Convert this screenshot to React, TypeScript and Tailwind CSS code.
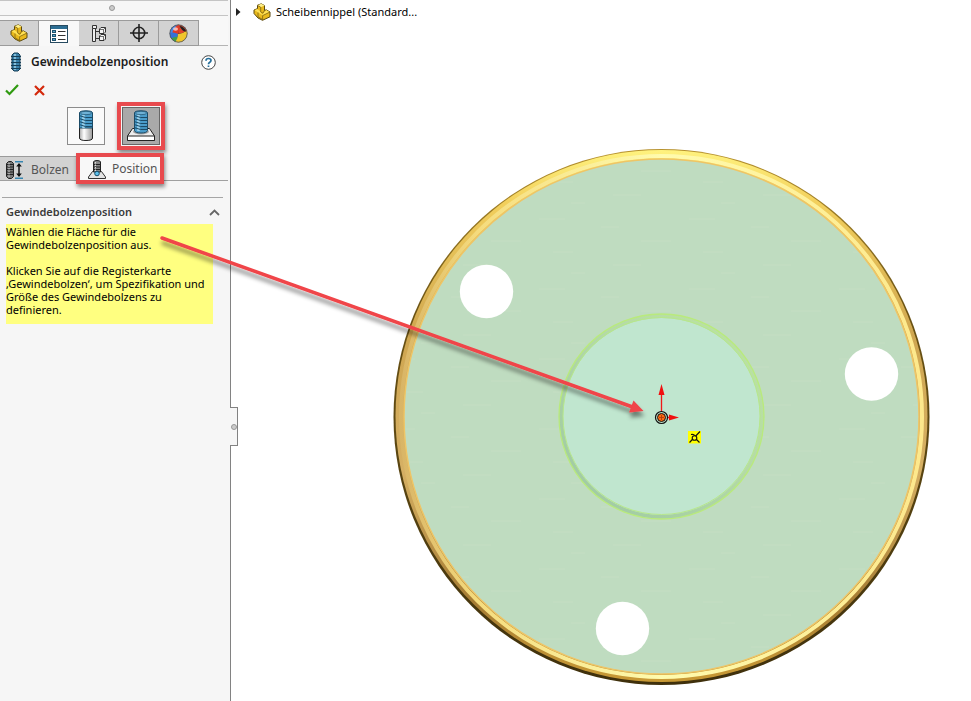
import type { ReactNode } from 'react';

const holes = [
  { x: 255.5, y: 291.5 },
  { x: 640.5, y: 374 },
  { x: 391.5, y: 628.5 },
];

function PartIcon() {
  return (
    <svg width="18" height="18" viewBox="0 0 18 18" strokeLinejoin="round" aria-hidden="true">
      <path d="M1 7 L4.500 5.600 V2.200 L8.300 .8 L11.500 2.600 V7.500 L13.200 6.800 L17 9 V13.800 L9.500 17.300 L5 15 L1 10.500 Z" fill="#e9b91c" stroke="#5c4a10" />
      <path d="M4.500 2.200 L8.300 .8 L11.500 2.600 L7.700 4.200 Z" fill="#fff08a" />
      <path d="M1.400 7 L4.500 6 L8 9 L9 11.800 L13.200 7 L16.600 9 L9.700 12.600 Z" fill="#ffe155" />
      <path d="M4.500 2.400 L7.700 4.200 V9 L10 10.200 L11.500 7.200 M9.600 12.600 V17 M9.600 12.600 L17 9 M5 9.500 V13.800 L9.600 16.500" fill="none" stroke="#7d6414" strokeWidth=".8" />
    </svg>
  );
}

function ListIcon() {
  return (
    <svg width="18" height="18" viewBox="0 0 18 18" aria-hidden="true">
      <rect x=".5" y=".5" width="17" height="17" fill="#fff" stroke="#274a60" />
      <rect x="1" y="1" width="16" height="3" fill="#2b6d93" />
      {[6, 10, 14].map((y) => (
        <g key={y}>
          <rect x="2.500" y={y - 0.5} width="3" height="2" fill="#58a9cf" stroke="#1f526e" />
          <path d={`M8 ${y + 0.5} H15.500`} stroke="#333" />
        </g>
      ))}
    </svg>
  );
}

function ConfigIcon() {
  return (
    <svg width="16" height="19" viewBox="0 0 16 19" fill="none" stroke="#333" aria-hidden="true">
      <path d="M1.500 1.500 H5.500 V4.500 H1.500 Z M1.500 4.500 V17.500 H4.500 V4.500 M4.500 7.500 H8 M4.500 14.500 H8" fill="#eee" />
      <path d="M8.500 5 L10 3.500 H14.500 V8 L13 9.500 H8.500 Z M8.500 12 L10 10.500 H14.500 V15 L13 16.500 H8.500 Z" fill="#f4f4f4" />
      <path d="M8.500 5.500 H12.500 V9.500 M12.500 5.500 L14.500 3.500 M8.500 12.500 H12.500 V16.500 M12.500 12.500 L14.500 10.500" strokeWidth=".7" />
    </svg>
  );
}

function TargetIcon() {
  return (
    <svg width="18" height="18" viewBox="0 0 18 18" fill="none" stroke="#222" strokeWidth="1.600" aria-hidden="true">
      <circle cx="9" cy="9" r="5.700" />
      <path d="M9 0 V18 M0 9 H18" />
    </svg>
  );
}

function AppearanceIcon() {
  return (
    <svg width="19" height="19" viewBox="0 0 19 19" aria-hidden="true">
      <circle cx="9.500" cy="9.500" r="8.700" fill="#333" />
      <path d="M9 .8 A8.700 8.700 0 0 0 .8 9 Q4 11.500 8.500 10 Z" fill="#4b86e4" />
      <path d="M9 .8 Q4 4 3.500 9 Q6 11 9.500 9.500 Q10 4 12 1.200 Z" fill="#e33a26" />
      <path d="M.8 9 Q5 7.500 9 10 Q9 15 6.500 17.700 A8.700 8.700 0 0 1 .8 9 Z" fill="#3572d8" />
      <path d="M2.500 14.500 Q6 12 9 13 Q8.500 16 6.500 17.700 Q4 16.800 2.500 14.500 Z" fill="#3fa04a" />
      <path d="M9 10 Q14 9.500 17.700 6.500 A8.700 8.700 0 0 1 6.500 17.700 Q9 15 9 10 Z" fill="#f0c62c" />
      <path d="M9.500 9.500 Q9.500 4 12 1.200 Q15.500 2.500 17.700 6.500 Q14 9.500 9.500 9.500 Z" fill="#e0452c" />
      <path d="M10.500 2 Q15.500 2.500 17.200 7.500 Q13.500 8 10.500 2 Z" fill="#222" />
      <ellipse cx="6.500" cy="5" rx="2.500" ry="1.800" fill="#fff" opacity=".65" />
      <circle cx="9.500" cy="9.500" r="8.700" fill="none" stroke="#555" strokeWidth=".8" />
    </svg>
  );
}

function StudIcon() {
  return (
    <svg width="12" height="20" viewBox="0 0 12 20" aria-hidden="true">
      <path d="M4 1 H8 L10 3 V17 L8 19 H4 L2 17 V3 Z" fill="#3a82ab" stroke="#173f57" />
      <path d="M1 4.500 H11 M1 7.500 H11 M1 10.500 H11 M1 13.500 H11 M1 16.500 H11" stroke="#173f57" />
      <path d="M5 2 V18" stroke="#9ccfe8" strokeWidth="1.500" strokeDasharray="2 1" />
    </svg>
  );
}

function Thread() {
  return (
    <g>
      <path d="M3.500 3 Q3.500 .8 10 .8 Q16.500 .8 16.500 3 V18 H3.500 Z" fill="#4a9cca" stroke="#1b4b67" />
      <path d="M7.500 3 V18" stroke="#a2d6ee" strokeWidth="2.500" />
      <ellipse cx="10" cy="3" rx="5.500" ry="1.700" fill="#6fb2d6" stroke="#1d4f6c" strokeWidth=".7" />
      <path d="M3 5.500 Q9 8.500 17 7.500 M3 8.500 Q9 11.500 17 10.500 M3 11.500 Q9 14.500 17 13.500 M3 14.500 Q9 17.500 17 16.500" fill="none" stroke="#1b4b67" />
    </g>
  );
}

function ShaftStudIcon() {
  return (
    <svg width="20" height="32" viewBox="0 0 20 32" aria-hidden="true">
      <defs>
        <linearGradient id="shaft">
          <stop offset="0" stopColor="#aaa" />
          <stop offset=".35" stopColor="#fff" />
          <stop offset="1" stopColor="#9a9a9a" />
        </linearGradient>
      </defs>
      <path d="M3.500 16 V28 Q3.500 30.500 10 30.500 Q16.500 30.500 16.500 28 V16 Z" fill="url(#shaft)" stroke="#222" />
      <Thread />
    </svg>
  );
}

function PlateStudIcon() {
  return (
    <svg width="30" height="32" viewBox="0 0 30 32" aria-hidden="true">
      <path d="M6.500 18.500 H23.500 L28.500 26 V30.500 H1.500 V26 Z" fill="#eee" stroke="#222" />
      <path d="M1.500 26 H28.500 V30.500 H1.500 Z" fill="#fff" stroke="#222" />
      <ellipse cx="15" cy="21.500" rx="8" ry="3" fill="#a4a4a4" />
      <g transform="translate(5 0)">
        <path d="M3.500 17 V20.500 Q4 23 10 23 Q16 23 16.500 20.500 V17 Z" fill="#4a9cca" stroke="#1b4b67" />
        <Thread />
        <path d="M4 18 H16" stroke="#4a9cca" strokeWidth="1.500" />
        <path d="M7.500 17 V21" stroke="#a2d6ee" strokeWidth="2.500" />
        <path d="M3 17.500 Q9 20.500 17 19.500" fill="none" stroke="#1b4b67" />
      </g>
    </svg>
  );
}

function BoltSizeIcon() {
  return (
    <svg width="17" height="18" viewBox="0 0 17 18" aria-hidden="true">
      <path d="M2.500 .5 H5.500 L7.500 2.500 V15.500 L5.500 17.500 H2.500 L.5 15.500 V2.500 Z" fill="#777" stroke="#222" />
      <path d="M0 3.500 H8 M0 6 H8 M0 8.500 H8 M0 11 H8 M0 13.500 H8" stroke="#222" />
      <path d="M3 2 V16" stroke="#ddd" strokeDasharray="1.500 1" />
      <path d="M9 .8 H17 M9 17.200 H17" stroke="#3886b0" strokeWidth="1.500" />
      <path d="M13 3 V15" stroke="#111" strokeWidth="1.500" />
      <path d="M10.200 5.500 L13 2 L15.800 5.500 Z M10.200 12.500 L13 16 L15.800 12.500 Z" fill="#111" />
    </svg>
  );
}

function BoltPositionIcon() {
  return (
    <svg width="18" height="19" viewBox="0 0 18 19" aria-hidden="true">
      <path d="M4.500 11.500 H13.500 L17.500 17 V18.500 H.5 V17 Z" fill="#e4e4e4" stroke="#333" />
      <path d="M5.500 2 Q5.500 .5 9 .5 Q12.500 .5 12.500 2 V12 H5.500 Z" fill="#888" stroke="#222" />
      <path d="M5 4.500 H13 M5 7 H13 M5 9.500 H13" stroke="#222" />
      <path d="M7.500 2 V11" stroke="#ddd" strokeDasharray="1.500 1" />
      <circle cx="9" cy="13.500" r="2.300" fill="#5fc0ea" stroke="#124a68" />
    </svg>
  );
}

function ManagerTab({ label, active, children }: { label: string; active?: boolean; children: ReactNode }) {
  return (
    <button
      type="button"
      aria-label={label}
      className={
        active
          ? 'flex h-[26px] w-10 items-center justify-center border-t border-[#a0a0a0] bg-[#f8f8f8]'
          : 'flex h-[26px] w-10 items-center justify-center border border-l-0 border-[#9b9b9b] bg-[#d2d2d2]'
      }
    >
      {children}
    </button>
  );
}

function PropertyPanel() {
  return (
    <aside className="relative w-[231px] shrink-0 border-r border-[#828282] bg-[#f6f6f6]">
      <div className="mr-0.5 flex h-4 items-center justify-center border-t border-b border-[#c4c4c4] pr-1">
        <span className="size-1.5 rounded-full border border-[#999] bg-[#ccc]" />
      </div>

      <div className="mr-0.5 flex border-b border-[#b4b4b4] bg-[#f8f8f8] pt-1">
        <div className="-mb-px -ml-px flex">
          <ManagerTab label="FeatureManager"><PartIcon /></ManagerTab>
          <ManagerTab label="PropertyManager" active><ListIcon /></ManagerTab>
          <ManagerTab label="ConfigurationManager"><ConfigIcon /></ManagerTab>
          <ManagerTab label="DimXpertManager"><TargetIcon /></ManagerTab>
          <ManagerTab label="DisplayManager"><AppearanceIcon /></ManagerTab>
        </div>
      </div>

      <div className="flex h-8 items-center pr-[14px] pl-[10px]">
        <StudIcon />
        <h1 className="ml-[9px] flex-1 text-[12px] font-semibold text-[#1c1c1c]">Gewindebolzenposition</h1>
        <button type="button" aria-label="Hilfe">
          <svg width="15" height="15" viewBox="0 0 15 15" fill="none">
            <circle cx="7.500" cy="7.500" r="6.800" fill="#fff" stroke="#444" />
            <path d="M5 5.700 Q5 3.500 7.500 3.500 Q10 3.500 10 5.500 Q10 6.700 8.500 7.400 Q7.500 8 7.500 9.300 M7.500 10.400 V12" stroke="#256f9b" strokeWidth="1.700" />
          </svg>
        </button>
      </div>

      <div className="flex h-6 items-center gap-[15px] pl-[5px]">
        <button type="button" aria-label="OK">
          <svg width="14" height="12" viewBox="0 0 14 12" fill="none">
            <path d="M1 6.500 L4.500 10 L13 1" stroke="#2f9a10" strokeWidth="2.200" />
          </svg>
        </button>
        <button type="button" aria-label="Abbrechen">
          <svg width="11" height="11" viewBox="0 0 11 11" fill="none">
            <path d="M1 1 L10 10 M10 1 L1 10" stroke="#d4290c" strokeWidth="2.200" />
          </svg>
        </button>
      </div>

      <div className="flex gap-[17px] pt-[5px] pl-[67px]">
        <button type="button" aria-label="Gewindebolzen mit Schaft" className="flex size-[38px] items-center justify-center border border-[#8c8c8c] bg-[#fafafa]">
          <ShaftStudIcon />
        </button>
        <button type="button" aria-label="Gewindebolzen auf Fläche" className="relative flex size-[38px] items-center justify-center border border-[#666] bg-[#a9a9a9]">
          <PlateStudIcon />
          <span className="pointer-events-none absolute -inset-1.5 border-4 border-[#e84a4e] shadow-[1px_3px_4px_rgba(0,0,0,0.45)]" />
        </button>
      </div>

      <div className="mt-[11px] mr-0.5 flex h-[25px] border-b border-[#a0a0a0] text-[12px] text-[#555]">
        <button type="button" className="flex w-20 items-center gap-2 border-t border-[#9b9b9b] bg-[#d2d2d2] pt-0.5 pl-1.5">
          <BoltSizeIcon />
          Bolzen
        </button>
        <button type="button" className="relative flex w-20 items-center gap-1.5 bg-[#f8f8f8] pt-0.5 pl-2">
          <BoltPositionIcon />
          Position
          <span className="pointer-events-none absolute -inset-x-1 -top-[3px] -bottom-1 border-4 border-[#e84a4e] shadow-[1px_3px_4px_rgba(0,0,0,0.45)]" />
        </button>
      </div>

      <section className="mt-4 mr-[7px] ml-0.5 border-t border-[#a6a6a6] pl-1">
        <button type="button" aria-expanded="true" className="flex h-[26px] w-full items-center justify-between pt-0.5 pr-[3px] text-[11px] font-semibold text-[#3a3a3a]">
          Gewindebolzenposition
          <svg width="11" height="7" viewBox="0 0 11 7" fill="none" aria-hidden="true">
            <path d="M1 6 L5.500 1.500 L10 6" stroke="#666" strokeWidth="1.800" />
          </svg>
        </button>
        <div className="mr-[10px] h-[100px] bg-[#ffff80] pt-px text-[11px] leading-[13px] text-black">
          <p>Wählen die Fläche für die<br />Gewindebolzenposition aus.</p>
          <p className="mt-[13px] whitespace-nowrap">
            Klicken Sie auf die Registerkarte<br />
            ‚Gewindebolzen‘, um Spezifikation und<br />
            Größe des Gewindebolzens zu<br />
            definieren.
          </p>
        </div>
      </section>

      <button
        type="button"
        aria-label="Bereich einklappen"
        className="absolute top-[407px] left-full flex h-[39px] w-2 items-center justify-center border border-l-0 border-[#828282] bg-[#f6f6f6]"
      >
        <span className="size-1.5 shrink-0 rounded-full border border-[#999] bg-[#ccc]" />
      </button>
    </aside>
  );
}

function DiscView() {
  return (
    <svg className="absolute inset-0 size-full" role="img" aria-label="Scheibennippel">
      <defs>
        <linearGradient id="edge" x1="0" y1="0" x2="0" y2="1">
          <stop offset="0" stopColor="#b8932f" />
          <stop offset=".3" stopColor="#6b5314" />
          <stop offset="1" stopColor="#3f300c" />
        </linearGradient>
        <linearGradient id="rim" x1="0" y1="0" x2="0" y2="1">
          <stop offset="0" stopColor="#fff27e" />
          <stop offset=".1" stopColor="#f2cf5c" />
          <stop offset=".35" stopColor="#cfa650" />
          <stop offset=".6" stopColor="#d6b064" />
          <stop offset=".85" stopColor="#a67c33" />
          <stop offset="1" stopColor="#c99a35" />
        </linearGradient>
        <linearGradient id="shine" x1="0" y1="0" x2="1" y2="0">
          <stop offset="0" stopColor="#d9b566" />
          <stop offset=".15" stopColor="#f5dc7e" />
          <stop offset=".5" stopColor="#fffbae" />
          <stop offset="1" stopColor="#fde88c" />
        </linearGradient>
        <linearGradient id="groove" x1="0" y1="1" x2="1" y2="0">
          <stop offset="0" stopColor="#9cc7a4" />
          <stop offset=".6" stopColor="#b5dba6" />
          <stop offset="1" stopColor="#bce4a0" />
        </linearGradient>
        <pattern id="brushed" width="150" height="70" patternUnits="userSpaceOnUse">
          <path d="M8 9 h26 M70 17 h18 M110 31 h30 M22 42 h20 M82 55 h28 M40 63 h14" stroke="#cbe3ca" strokeWidth=".7" opacity=".6" />
        </pattern>
      </defs>

      <circle cx="430.500" cy="417" r="268" fill="url(#edge)" />
      <circle cx="430.500" cy="416" r="266" fill="url(#rim)" />
      <circle cx="430.500" cy="416.500" r="260.500" fill="none" stroke="url(#shine)" strokeWidth="4" />
      <circle cx="430.500" cy="416.500" r="257.500" fill="#bfdcc0" stroke="#eec566" strokeWidth="1.500" />
      <circle cx="430.500" cy="416.500" r="256" fill="url(#brushed)" />

      <circle cx="430.500" cy="416.500" r="100.500" fill="#c0e6cf" stroke="url(#groove)" strokeWidth="4" />
      <circle cx="430.500" cy="416.500" r="102.500" fill="none" stroke="#b9ea7c" strokeWidth="1.300" />
      <circle cx="430.500" cy="416" r="98.500" fill="none" stroke="#b7e88a" strokeWidth="1" />

      {holes.map((hole) => (
        <circle key={hole.x} cx={hole.x} cy={hole.y} r="26.700" fill="#fff" />
      ))}

      <path d="M430.500 412 V394 M436 417.500 H440" stroke="#f01818" strokeWidth="1.300" />
      <path d="M430.500 384 L433.500 395 H427.500 Z M448 417.500 L438 414.500 V420.500 Z" fill="#f01010" />
      <circle cx="430.500" cy="417.500" r="4" fill="#ff6a10" stroke="#111" />
      <circle cx="430.500" cy="417.500" r="6" fill="none" stroke="#111" strokeWidth="1.200" />
      <path d="M428 417.500 H433 M430.500 415 V420" stroke="#a8390a" strokeWidth=".8" />

      <rect x="457" y="431" width="13" height="12.500" fill="#ffff00" />
      <path d="M458.500 442.500 L469 431.500 M460 434.500 Q463 434 464 436 M465 439 L468.500 442.500" fill="none" stroke="#111" strokeWidth="1.200" />
      <circle cx="463.500" cy="438" r="2.300" fill="#ffff00" stroke="#111" strokeWidth="1.100" />
    </svg>
  );
}

function Pointer() {
  return (
    <svg className="pointer-events-none absolute inset-0 size-full" aria-hidden="true">
      <defs>
        <filter id="drop" x="-10%" y="-10%" width="120%" height="130%">
          <feDropShadow dx="1" dy="5" stdDeviation="2" floodColor="#000" floodOpacity=".45" />
        </filter>
      </defs>
      <g filter="url(#drop)">
        <path d="M162 238 L634 407.500" stroke="#f04448" strokeWidth="3.500" strokeLinecap="round" />
        <path d="M643.500 411 L629 412.500 L633.500 400.500 Z" fill="#f04448" />
      </g>
    </svg>
  );
}

export default function App() {
  return (
    <div className="relative flex min-h-screen bg-white font-['Noto_Sans','Open_Sans',sans-serif]">
      <PropertyPanel />
      <main className="relative min-w-0 flex-1">
        <DiscView />
        <div className="relative flex h-6 items-center pl-1 text-[11px] text-black">
          <svg width="6" height="8" viewBox="0 0 6 8" aria-hidden="true">
            <path d="M1 0 L5.500 4 L1 8 Z" fill="#222" />
          </svg>
          <span className="mr-[5px] ml-3"><PartIcon /></span>
          Scheibennippel (Standard...
        </div>
      </main>
      <Pointer />
    </div>
  );
}
